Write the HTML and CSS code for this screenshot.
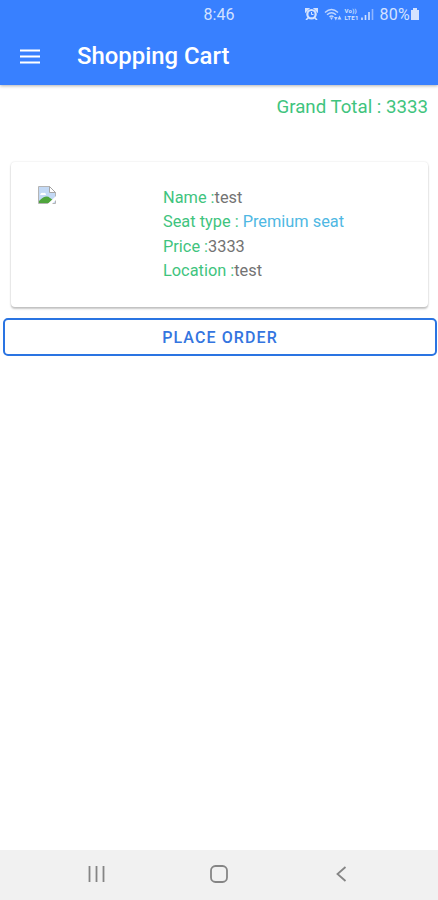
FILE: index.html
```
<!DOCTYPE html>
<html lang="en">
<head>
    <meta charset="UTF-8">
    <meta name="viewport" content="width=device-width, initial-scale=1.0">
    <title>Shopping Cart</title>
    <link rel="stylesheet" href="styles.css">
</head>
<body>
    <header class="header">
        <div class="status-bar">
            <span></span>
            <span class="clock">8:46</span>
            <div class="status-icons">
                <svg class="alarm" width="13" height="12" viewBox="0 0 13 12">
                    <path d="M0 0h4L0 4zM13 0H9l4 4zM1 12l3-3M12 12l-3-3" fill="#d3e2ff" stroke="#d3e2ff" stroke-width="1.600"/>
                    <circle cx="6.5" cy="6.2" r="4.2" fill="#3880ff" stroke="#d3e2ff" stroke-width="2.2"/>
                    <path d="M6.5 4v2.5h2" fill="none" stroke="#d3e2ff"/>
                </svg>
                <svg class="wifi" width="18" height="13" viewBox="0 0 18 13">
                    <path d="M1 4.500q6.500-6 13 0M3 6.800q4.500-4 9 0M5.500 9q2-2 4 0" fill="none" stroke="#c0d6ff" stroke-width="1.4"/>
                    <path d="M7.500 12L6 9.500h3z" fill="#c0d6ff"/>
                    <path d="M10 9l1.800 3.500L13.600 9zM13.500 11.500l2-4 2 4z" fill="#c0d6ff"/>
                </svg>
                <span class="volte"><span>Vo))</span><span>LTE1</span></span>
                <svg class="signal" width="13" height="12" viewBox="0 0 13 12">
                    <path d="M1 12V9.500M4.500 12V7M8 12V4" stroke="#d3e2ff" stroke-width="1.600"/>
                    <path d="M11.500 12V1" stroke="#8fb5ff" stroke-width="1.600"/>
                </svg>
                <span class="percent">80%</span>
                <svg class="battery" width="10" height="12" viewBox="0 0 10 12">
                    <path d="M3 0h4v2h2v10H1V2h2z" fill="#d3e2ff"/>
                </svg>
            </div>
        </div>
        <div class="toolbar">
            <svg class="menu" width="20" height="15" viewBox="0 0 20 15">
                <path d="M0 1.500h20M0 7.500h20M0 13.500h20" stroke="#fff" stroke-width="1.800"/>
            </svg>
            <h1>Shopping Cart</h1>
        </div>
    </header>
    <main class="content">
        <div class="total">Grand Total : 3333</div>
        <div class="card">
            <div class="thumb">
                <svg width="18" height="18" viewBox="0 0 18 18">
                    <path d="M.5.5h11l6 6v11H.5z" fill="#c3d9f5" stroke="#b4b4b4"/>
                    <path d="M2 9q1-3 3-2 3-1 3 2z" fill="#fff"/>
                    <path d="M1 17v-2q7-7 11-3l3 2v3z" fill="#4fa53c"/>
                    <path d="M11.500.5v6h6z" fill="#fff" stroke="#a5a5a5"/>
                    <path d="M9.500 18l8.500-8v4l-4 4z" fill="#fff"/>
                </svg>
            </div>
            <div class="details">
                <div><span class="label">Name :</span>test</div>
                <div><span class="label">Seat type :</span> <span class="seat">Premium seat</span></div>
                <div><span class="label">Price :</span>3333</div>
                <div><span class="label">Location :</span>test</div>
            </div>
        </div>
        <button class="order">PLACE ORDER</button>
    </main>
    <nav class="nav-bar">
        <svg width="18" height="18" viewBox="0 0 18 18">
            <path d="M2.500 1v16M9.500 1v16M16.500 1v16" stroke="#858585" stroke-width="1.800"/>
        </svg>
        <svg width="20" height="20" viewBox="0 0 20 20">
            <rect x="2" y="2" width="16" height="16" rx="4.500" fill="none" stroke="#858585" stroke-width="1.800"/>
        </svg>
        <svg width="18" height="18" viewBox="0 0 18 18">
            <path d="M12.500 2L4.500 9l8 7" fill="none" stroke="#858585" stroke-width="1.800"/>
        </svg>
    </nav>
</body>
</html>
```

FILE: styles.css
```
* {
    box-sizing: border-box;
    margin: 0;
    padding: 0;
}
body {
    font-family: Roboto, "Liberation Sans", sans-serif;
    display: flex;
    flex-direction: column;
    height: 100vh;
    background-color: #fff;
    color: #737373;
}
svg {
    display: block;
    flex: none;
}
.header {
    height: 85px;
    background-color: #3880ff;
    box-shadow: 0 1px 3px rgba(0, 0, 0, 0.3);
    color: #fff;
}
.status-bar {
    display: grid;
    grid-template-columns: 1fr auto 1fr;
    align-items: center;
    height: 28px;
    color: #d3e2ff;
    font-size: 16px;
}
.status-icons {
    display: flex;
    align-items: center;
    justify-content: flex-end;
    padding-right: 18px;
}
.wifi {
    margin-left: 6px;
}
.volte {
    display: flex;
    flex-direction: column;
    width: 17px;
    margin-left: 2px;
    font-size: 6px;
    font-weight: 700;
    line-height: 7px;
    letter-spacing: 0.3px;
}
.signal {
    margin-right: 5px;
}
.percent {
    letter-spacing: 0.3px;
}
.toolbar {
    display: flex;
    align-items: center;
    height: 56px;
    padding-left: 20px;
}
h1 {
    margin-left: 37px;
    font-size: 23.9px;
    font-weight: 500;
}
.content {
    flex: 1;
}
.total {
    height: 77px;
    padding: 10px 10px 0;
    color: #3fc47e;
    font-size: 18.7px;
    line-height: 24px;
    text-align: right;
}
.card {
    display: flex;
    height: 145px;
    margin: 0 10px 0 11px;
    padding: 24px 27px;
    border-radius: 4px;
    box-shadow: 0 2px 2px rgba(0, 0, 0, 0.22), 0 0 2px rgba(0, 0, 0, 0.14);
}
.thumb {
    width: 125px;
}
.details {
    font-size: 16.35px;
    line-height: 24.4px;
}
.label {
    color: #3fc47e;
}
.seat {
    color: #4fb8e3;
}
.order {
    display: block;
    width: 434px;
    height: 38px;
    margin: 11px auto 0 3px;
    border: 2px solid #2a74e2;
    border-radius: 5px;
    background-color: #fff;
    color: #3475e0;
    font-family: inherit;
    font-size: 16px;
    font-weight: 500;
    letter-spacing: 1.1px;
}
.nav-bar {
    display: flex;
    align-items: center;
    justify-content: space-between;
    height: 50px;
    padding: 0 87px 2px;
    background-color: #f1f1f1;
}
```
